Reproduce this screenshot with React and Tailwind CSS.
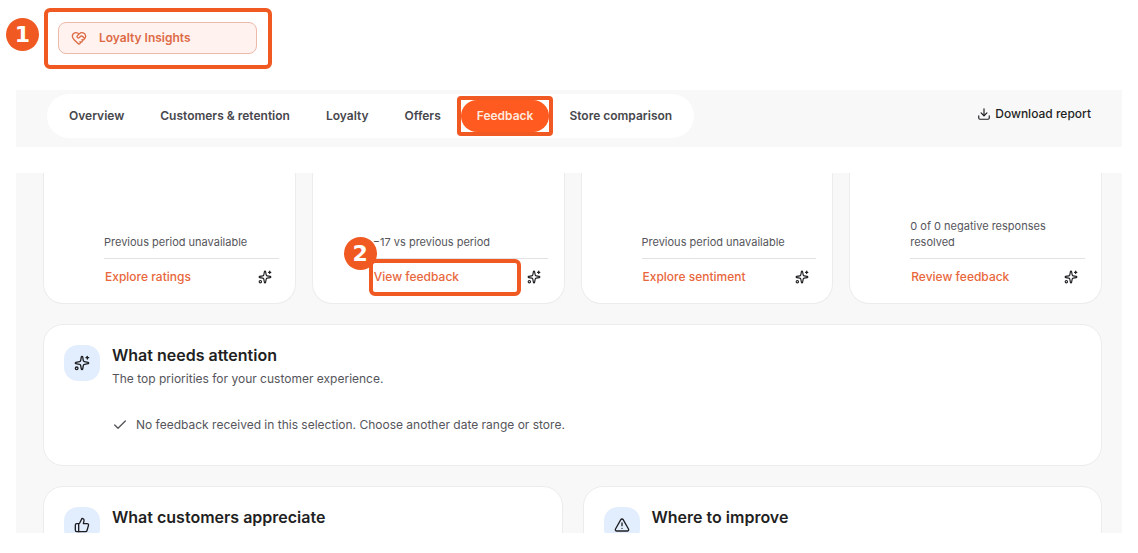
import { Check, Download, HeartHandshake, Sparkles, ThumbsUp, TriangleAlert } from 'lucide-react'

const tabs = ['Overview', 'Customers & retention', 'Loyalty', 'Offers', 'Feedback', 'Store comparison']

const stats = [
  { note: 'Previous period unavailable', action: 'Explore ratings' },
  { note: '−17 vs previous period', action: 'View feedback', step: 2 },
  { note: 'Previous period unavailable', action: 'Explore sentiment' },
  { note: '0 of 0 negative responses resolved', action: 'Review feedback' },
]

function StepBadge({ children, className = '' }) {
  return (
    <span
      className={`flex w-[33px] h-[33px] shrink-0 items-center justify-center rounded-full bg-[#f05a22] font-['DejaVu_Sans',sans-serif] text-[22px] leading-none font-bold text-white ${className}`}
    >
      {children}
    </span>
  )
}

function Tabs() {
  return (
    <nav className="flex gap-1 rounded-full bg-white p-1.5">
      {tabs.map((label) => {
        const active = label === 'Feedback'
        return (
          <button
            key={label}
            type="button"
            className={`relative h-8 rounded-full px-4 text-[12px] font-semibold whitespace-nowrap ${
              active ? 'bg-[#ff5a1f] text-[#ffe9df]' : 'text-[#47474d]'
            }`}
          >
            {label}
            {active && <span className="absolute -inset-1 rounded-sm border-4 border-[#f05a22]" />}
          </button>
        )
      })}
    </nav>
  )
}

function StatCard({ note, action, step }) {
  return (
    <article className="flex h-[131px] flex-col justify-end rounded-b-[20px] border border-t-0 border-[#ececec] bg-white pr-4 pb-2 pl-[60px]">
      <p className="pb-2 text-[11px] leading-4 text-[#55555b]">{note}</p>
      <div className="relative flex h-[37px] items-center justify-between border-t border-[#e2e2e4] pr-[7px] pl-px">
        <a href="#" className="text-[12px] font-medium text-[#e8673c]">
          {action}
        </a>
        <Sparkles size={14} className="text-[#1f1f23]" />
        {step && (
          <>
            <span className="absolute top-0 -left-1 h-[37px] w-[152px] rounded-md border-4 border-[#f05a22]" />
            <StepBadge className="absolute -top-[22px] -left-[29px]">{step}</StepBadge>
          </>
        )}
      </div>
    </article>
  )
}

function InsightCard({ icon: Icon, title, subtitle, children }) {
  return (
    <article className="rounded-[20px] border border-[#ececec] bg-white p-5">
      <div className="flex gap-3">
        <span className="flex h-9 w-9 shrink-0 items-center justify-center rounded-[14px] bg-[#e2eefd]">
          <Icon size={16} className="text-[#1f1f23]" />
        </span>
        <div className="text-[12px] leading-5 text-[#55555b]">
          <h2 className="pb-1 text-[16px] leading-5 font-semibold text-[#1f1f23]">{title}</h2>
          {subtitle && <p>{subtitle}</p>}
          {children}
        </div>
      </div>
    </article>
  )
}

export default function App() {
  return (
    <div className="bg-white pt-2 pb-5 font-['Inter',sans-serif]">
      <div className="flex items-start pl-1.5">
        <StepBadge className="mt-2.5">1</StepBadge>
        <div className="ml-[5px] w-[228px] rounded-md border-4 border-[#f05a22] p-2.5 pr-[11px] pb-[11px]">
          <button
            type="button"
            className="flex h-8 w-full items-center gap-3 rounded-lg border border-[#edb9a8] bg-[#fff2ef] px-3 text-[12px] font-semibold text-[#dd6a45]"
          >
            <HeartHandshake size={16} />
            Loyalty Insights
          </button>
        </div>
      </div>

      <header className="mx-4 mt-[21px] flex items-start justify-between bg-[#f8f8f8] pt-1 pr-[31px] pb-[9px] pl-[31px]">
        <Tabs />
        <button type="button" className="flex h-10 items-center gap-1 text-[12px] font-medium text-[#1f1f23]">
          <Download size={14} />
          Download report
        </button>
      </header>

      <main className="mx-4 mt-[26px] h-[360px] overflow-hidden bg-[#f8f8f8] pr-5 pl-[27px]">
        <div className="flex flex-col gap-5">
          <section className="grid grid-cols-4 gap-4">
            {stats.map((stat) => (
              <StatCard key={stat.action} {...stat} />
            ))}
          </section>

          <InsightCard
            icon={Sparkles}
            title="What needs attention"
            subtitle="The top priorities for your customer experience."
          >
            <p className="flex items-center gap-2 pt-[26px] pb-[10px]">
              <Check size={16} />
              No feedback received in this selection. Choose another date range or store.
            </p>
          </InsightCard>

          <section className="grid grid-cols-2 gap-5">
            <InsightCard icon={ThumbsUp} title="What customers appreciate" />
            <InsightCard icon={TriangleAlert} title="Where to improve" />
          </section>
        </div>
      </main>
    </div>
  )
}
